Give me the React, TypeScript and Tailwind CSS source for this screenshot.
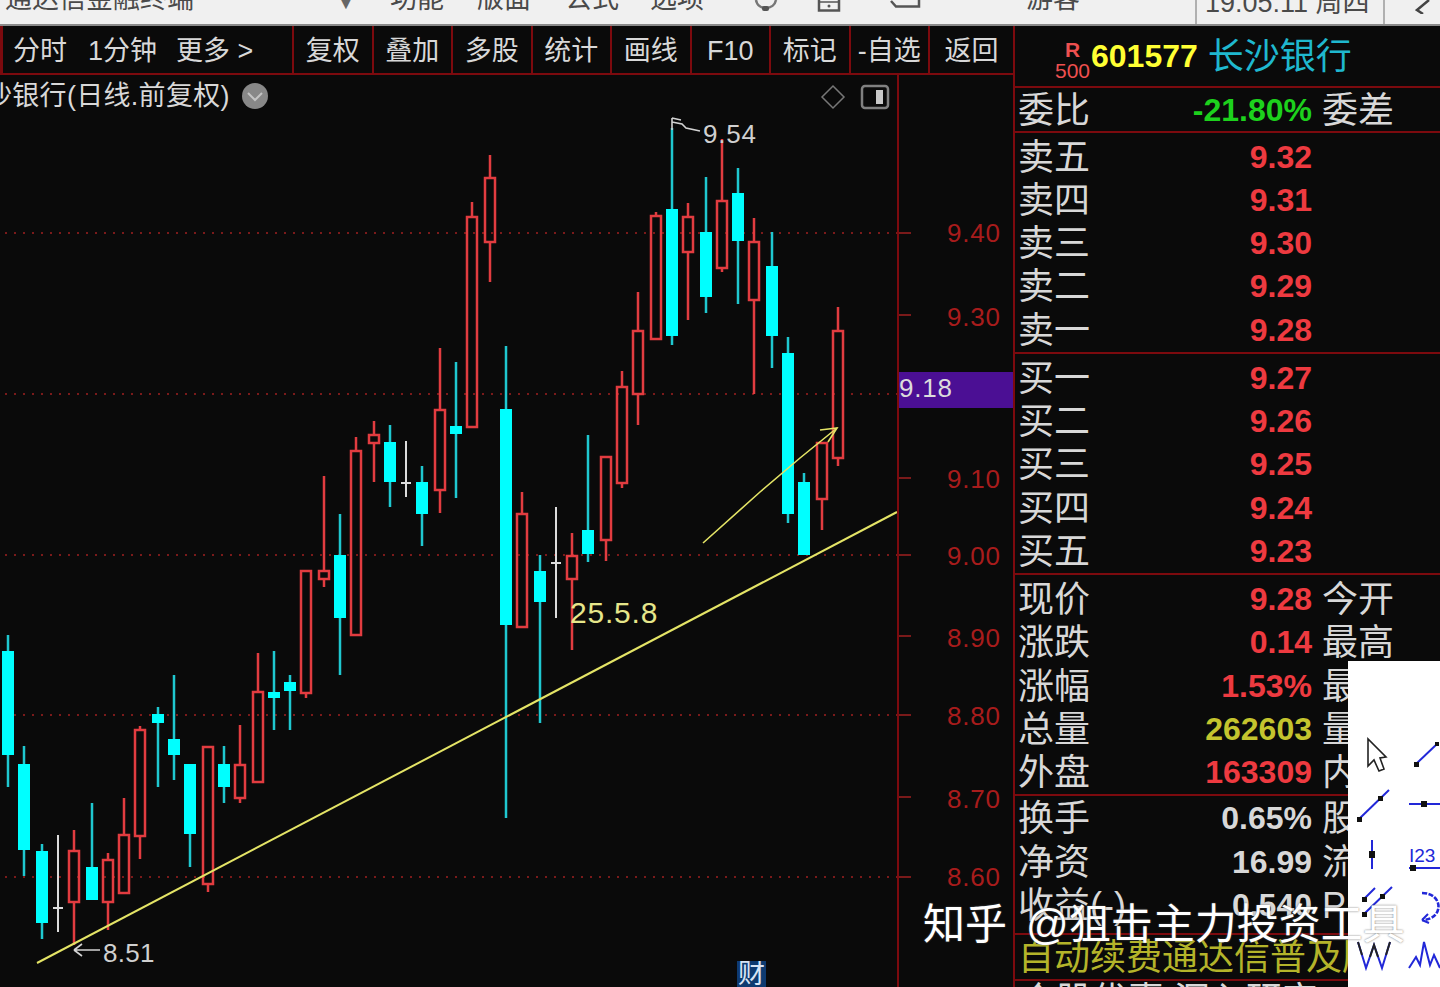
import React from "react";

type C = [string, number, number, number, number, number];
const candles: C[] = [
  ["c", 8, 635, 651, 755, 787], ["c", 24, 746, 764, 850, 876], ["c", 42, 844, 851, 923, 939],
  ["w", 58, 835, 908, 908, 932], ["r", 74, 830, 851, 902, 945], ["c", 92, 803, 867, 900, 900],
  ["r", 108, 853, 860, 902, 930], ["r", 124, 798, 835, 893, 893], ["r", 140, 726, 730, 836, 859],
  ["c", 158, 707, 714, 723, 787], ["c", 174, 675, 739, 755, 780], ["c", 190, 764, 764, 834, 867],
  ["r", 208, 747, 747, 884, 892], ["c", 224, 746, 764, 787, 803], ["r", 240, 725, 765, 798, 803],
  ["r", 258, 653, 692, 782, 782], ["c", 274, 651, 692, 698, 730], ["c", 290, 675, 682, 691, 730],
  ["r", 306, 571, 571, 693, 698], ["r", 324, 476, 571, 579, 587], ["c", 340, 514, 555, 618, 675],
  ["r", 356, 437, 451, 635, 635], ["r", 374, 421, 435, 443, 482], ["c", 390, 425, 442, 482, 507],
  ["w", 406, 441, 483, 483, 497], ["c", 422, 466, 482, 514, 546], ["r", 440, 348, 410, 490, 513],
  ["c", 456, 362, 426, 434, 498], ["r", 472, 202, 217, 427, 427], ["r", 490, 155, 178, 242, 282],
  ["c", 506, 346, 409, 625, 818], ["r", 522, 492, 514, 627, 627], ["c", 540, 555, 571, 602, 723],
  ["w", 556, 507, 563, 563, 618], ["r", 572, 533, 556, 579, 650], ["c", 588, 435, 530, 554, 562],
  ["r", 606, 457, 457, 540, 561], ["r", 622, 371, 387, 483, 488], ["r", 638, 292, 331, 394, 425],
  ["r", 656, 212, 216, 339, 339], ["c", 672, 128, 209, 336, 345], ["r", 688, 203, 217, 252, 320],
  ["c", 706, 177, 232, 297, 313], ["r", 722, 139, 201, 268, 272], ["c", 738, 168, 193, 241, 304],
  ["r", 754, 218, 242, 300, 394], ["c", 772, 232, 266, 336, 368], ["c", 788, 337, 353, 514, 523],
  ["c", 804, 473, 482, 555, 555], ["r", 822, 443, 443, 499, 530], ["r", 838, 307, 331, 458, 466],
];

const sans = "font-['Liberation_Sans','Noto_Sans_CJK_SC',sans-serif]";

function Candle({ c }: { c: C }) {
  const [kind, x, hi, top, bot, lo] = c;
  if (kind === "w") {
    return (
      <g stroke="#dcdcdc" strokeWidth={2}>
        <line x1={x} x2={x} y1={hi} y2={lo} />
        <line x1={x - 5} x2={x + 5} y1={top} y2={top} />
      </g>
    );
  }
  if (kind === "c") {
    return (
      <g>
        <line x1={x} x2={x} y1={hi} y2={lo} stroke="#1fc8d0" strokeWidth={2.5} />
        <rect x={x - 6} y={top} width={12} height={bot - top} fill="#00ffff" />
      </g>
    );
  }
  return (
    <g stroke="#e23c40" strokeWidth={2.5}>
      <line x1={x} x2={x} y1={hi} y2={top} />
      <line x1={x} x2={x} y1={bot} y2={lo} />
      <rect x={x - 5} y={top} width={10} height={bot - top} fill="none" />
    </g>
  );
}

function Row({ label, value, color, second }: { label: string; value?: string; color?: string; second?: string }) {
  return (
    <div className="flex h-[43.25px] items-center whitespace-nowrap pl-[3px]">
      <span className="w-[100px] shrink-0 pt-[2px] text-[36px] leading-none text-[#d8d8d8]">{label}</span>
      <span className={`w-[194px] shrink-0 text-right text-[32px] leading-none font-bold ${color ?? ""}`}>{value}</span>
      <span className="ml-[10px] pt-[2px] text-[36px] leading-none text-[#d8d8d8]">{second}</span>
    </div>
  );
}

const red = "text-[#ee3a40]";
const gray = "text-[#d8d8d8]";
const olive = "text-[#c4c42e]";

const tools = ["复权", "叠加", "多股", "统计", "画线", "F10", "标记", "-自选"];

function ToolIcons() {
  return (
    <svg viewBox="1348 661 92 326" className="h-[326px] w-[92px]">
      <path
        d="M1368 739 L1368 766 L1374 760 L1379 771 L1384 769 L1380 758 L1386 757 Z"
        fill="none"
        stroke="#222"
        strokeWidth={1.6}
      />
      <g stroke="#2228d8" strokeWidth={2} fill="none">
        <line x1={1416} y1={764} x2={1437} y2={744} />
        <line x1={1359} y1={819} x2={1389} y2={790} />
        <line x1={1409} y1={804} x2={1440} y2={804} />
        <line x1={1372} y1={840} x2={1372} y2={869} />
        <line x1={1409} y1={868} x2={1440} y2={868} />
        <line x1={1364} y1={899} x2={1375} y2={888} />
        <line x1={1364} y1={914} x2={1392} y2={887} />
        <path d="M1422 893 C1444 893 1444 920 1422 920" strokeDasharray="5 1.5" strokeWidth={2.6} />
        <path d="M1422 920 L1428 914 M1422 920 L1429 923" />
        <path d="M1358 942 L1366 968 L1374 945 L1382 968 L1390 942" />
        <path d="M1409 968 L1416 957 L1420 965 L1424 942 L1430 965 L1434 955 L1440 968" />
      </g>
      <path d="M1358 942 L1362 955 M1370 957 L1374 945 L1378 957 M1386 955 L1390 942" fill="none" stroke="#222" strokeWidth={2} />
      <text x={1409} y={862} className={`${sans} text-[19px]`} fill="#2228d8">
        I23
      </text>
      <g fill="#111">
        <rect x={1414} y={762} width={5} height={5} />
        <rect x={1435} y={742} width={4} height={4} />
        <rect x={1357} y={817} width={5} height={5} />
        <rect x={1378} y={796} width={5} height={5} />
        <rect x={1421} y={801} width={6} height={6} />
        <rect x={1369} y={851} width={6} height={7} />
        <rect x={1410} y={865} width={6} height={6} />
        <rect x={1362} y={897} width={5} height={5} />
        <rect x={1362} y={912} width={5} height={5} />
        <rect x={1380} y={894} width={5} height={5} />
      </g>
    </svg>
  );
}

export default function App() {
  return (
    <div className={`relative h-[987px] w-[1440px] overflow-hidden bg-[#0a0a0a] ${sans}`}>
      {/* window title bar, cut off by the top edge */}
      <div className="flex h-[26px] items-start overflow-hidden border-b-2 border-[#8a8a8a] bg-[#f0f0f0] text-[27px] leading-[27px] whitespace-nowrap text-[#4a4a4a]">
        <span className="-mt-[14px] ml-[5px] w-[330px] shrink-0">通达信金融终端</span>
        <span className="-mt-[12px] w-[55px] shrink-0 text-[22px] text-[#666]">▼</span>
        <span className="-mt-[14px] w-[87px] shrink-0">功能</span>
        <span className="-mt-[14px] w-[88px] shrink-0">版面</span>
        <span className="-mt-[14px] w-[85px] shrink-0">公式</span>
        <span className="-mt-[14px] w-[103px] shrink-0">选项</span>
        <svg viewBox="0 0 26 12" className="h-[12px] w-[26px] shrink-0">
          <path d="M3 0 C4 6 9 8 13 8 C18 8 22 5 23 0" fill="none" stroke="#777" strokeWidth={2.5} />
          <rect x={9} y={6} width={7} height={5} rx={2} fill="#555" />
        </svg>
        <svg viewBox="0 0 24 12" className="ml-[38px] h-[12px] w-[24px] shrink-0">
          <path d="M2 0 V10.5 H22 V0" fill="none" stroke="#555" strokeWidth={2.5} />
          <line x1={2} x2={22} y1={2} y2={2} stroke="#555" strokeWidth={1.5} />
          <circle cx={12} cy={6} r={1.5} fill="#555" />
        </svg>
        <svg viewBox="0 0 32 8" className="ml-[49px] h-[8px] w-[32px] shrink-0">
          <path d="M1 1 L6 6.5 H29 V0" fill="none" stroke="#555" strokeWidth={2.5} />
        </svg>
        <span className="-mt-[14px] ml-[104px] w-[169px] shrink-0">游客</span>
        <span className="-mt-[10px] h-[36px] w-[190px] shrink-0 border-x-2 border-[#b0b0b0] pl-[8px]">19:05:11 周四</span>
        <svg viewBox="0 0 16 14" className="ml-[30px] h-[14px] w-[16px] shrink-0">
          <path d="M14 0 L2 10 L8 14" fill="none" stroke="#444" strokeWidth={2.5} />
        </svg>
      </div>

      <div className="flex h-[961px]">
        {/* left: toolbar and chart */}
        <div className="flex w-[1013px] shrink-0 flex-col">
          <div className="flex h-[49px] shrink-0 items-center border-b-2 border-[#7c0a0e] text-[27px] leading-none whitespace-nowrap text-[#d8d8d8]">
            <div className="flex h-full w-[294px] shrink-0 items-center border-x-2 border-l-[3px] border-[#7c0a0e] pt-[3px] pl-[10px]">
              <span className="w-[75px]">分时</span>
              <span className="w-[88px]">1分钟</span>
              <span>更多 &gt;</span>
            </div>
            {tools.map((t) => (
              <div
                key={t}
                className="flex h-full w-[79.5px] shrink-0 items-center justify-center border-r-2 border-[#7c0a0e] pt-[3px]"
              >
                {t}
              </div>
            ))}
            <div className="flex h-full flex-1 items-center justify-center pt-[3px]">返回</div>
          </div>

          <div className="flex min-h-0 flex-1">
            <div className="relative h-[912px] w-[897px] shrink-0 overflow-hidden">
              <svg viewBox="0 75 897 912" className="block h-[912px] w-[897px]">
                <g stroke="#7a1a1a" strokeWidth={2} strokeDasharray="2 7">
                  {[233, 394, 555, 715, 877].map((y) => (
                    <line key={y} x1={5} x2={897} y1={y} y2={y} />
                  ))}
                </g>
                {candles.map((c) => (
                  <Candle key={c[1]} c={c} />
                ))}
                <g stroke="#e4e466" strokeWidth={2} fill="none">
                  <line x1={37} y1={963} x2={897} y2={512} />
                  <path d="M703 543 L760 492 L800 458 L837 428" strokeWidth={1.6} />
                  <path d="M820 430 L837 428 L828 442" strokeWidth={1.6} />
                </g>
                <g stroke="#d4d4d4" strokeWidth={1.6} fill="none">
                  <path d="M700 131 L686 128 L682 124 L672 122 M672 118 L672 130 M672 118 L681 120" />
                  <path d="M100 950 L74 950 M74 950 L82 944 M74 950 L82 956" />
                </g>
                <text x={703} y={143} className="text-[26px]" fill="#d0d0d0" letterSpacing={0.8}>
                  9.54
                </text>
                <text x={103} y={962} className="text-[26px]" fill="#d0d0d0" letterSpacing={0.3}>
                  8.51
                </text>
                <text x={570} y={623} className="text-[30px]" fill="#e6e68a" letterSpacing={0.8}>
                  25.5.8
                </text>
                <path d="M833 86 L844 97 L833 108 L822 97 Z" fill="none" stroke="#777" strokeWidth={1.5} />
                <rect x={862} y={86} width={26} height={22} rx={3} fill="none" stroke="#808080" strokeWidth={2.5} />
                <rect x={876} y={90} width={7} height={14} fill="#c8c8c8" />
                <circle cx={255} cy={96} r={13} fill="#888" />
                <path d="M248 93 L255 100 L262 93" fill="none" stroke="#c4c4c4" strokeWidth={2} />
              </svg>
              <div className="absolute top-[6px] -left-[15px] text-[27px] leading-[30px] tracking-[0.3px] whitespace-nowrap text-[#d8d8d8]">
                沙银行(日线.前复权)
              </div>
              <div className="absolute bottom-0 left-[737px] flex h-[26px] w-[29px] items-start justify-center overflow-hidden bg-[#0e3a70] text-[27px] leading-[27px] text-[#d8e4f4]">
                财
              </div>
            </div>

            <div className="h-[912px] flex-1 border-l-2 border-[#7c0a0e]">
              <svg viewBox="899 75 114 912" className="block h-[912px] w-[114px]">
                <g stroke="#7a1a1a" strokeWidth={2}>
                  {[233, 315, 394, 478, 555, 636, 715, 797, 877].map((y) => (
                    <line key={y} x1={899} x2={911} y1={y} y2={y} />
                  ))}
                </g>
                <rect x={899} y={372} width={114} height={36} fill="#4b0f94" />
                <text x={899} y={397} className="text-[26px]" fill="#dcdcdc" letterSpacing={0.8}>
                  9.18
                </text>
                {[
                  ["9.40", 233],
                  ["9.30", 317],
                  ["9.10", 479],
                  ["9.00", 556],
                  ["8.90", 638],
                  ["8.80", 716],
                  ["8.70", 799],
                  ["8.60", 877],
                ].map(([t, y]) => (
                  <text key={t} x={947} y={(y as number) + 9} className="text-[26px]" fill="#a81c1c" letterSpacing={0.8}>
                    {t}
                  </text>
                ))}
              </svg>
            </div>
          </div>
        </div>

        {/* right: quote panel */}
        <div className="min-w-0 flex-1 overflow-hidden border-l-2 border-[#7c0a0e]">
          <div className="flex h-[62px] items-center border-b-2 border-[#7c0a0e] pl-[39px] whitespace-nowrap">
            <div className="flex w-[37px] shrink-0 flex-col items-center pt-[8px] leading-none text-[#ee5050]">
              <span className="text-[21px] leading-[21px] font-bold">R</span>
              <span className="text-[21px] leading-[21px]">500</span>
            </div>
            <span className="text-[32px] leading-none font-bold text-[#ffff33]">601577</span>
            <span className="ml-[10px] pt-[2px] text-[36px] leading-none text-[#1fb8cf]">长沙银行</span>
          </div>
          <div className="h-[45px] border-b-2 border-[#7c0a0e]">
            <Row label="委比" value="-21.80%" color="text-[#1dd11d]" second="委差" />
          </div>
          <div className="border-b-2 border-[#7c0a0e] pt-[2px] pb-[1px]">
            <Row label="卖五" value="9.32" color={red} />
            <Row label="卖四" value="9.31" color={red} />
            <Row label="卖三" value="9.30" color={red} />
            <Row label="卖二" value="9.29" color={red} />
            <Row label="卖一" value="9.28" color={red} />
          </div>
          <div className="border-b-2 border-[#7c0a0e] pt-[2px]">
            <Row label="买一" value="9.27" color={red} />
            <Row label="买二" value="9.26" color={red} />
            <Row label="买三" value="9.25" color={red} />
            <Row label="买四" value="9.24" color={red} />
            <Row label="买五" value="9.23" color={red} />
          </div>
          <div className="border-b-2 border-[#7c0a0e] pt-[3px]">
            <Row label="现价" value="9.28" color={red} second="今开" />
            <Row label="涨跌" value="0.14" color={red} second="最高" />
            <Row label="涨幅" value="1.53%" color={red} second="最低" />
            <Row label="总量" value="262603" color={olive} second="量比" />
            <Row label="外盘" value="163309" color={red} second="内盘" />
          </div>
          <div className="border-b-2 border-[#7c0a0e] pt-[1px] pb-[6px]">
            <Row label="换手" value="0.65%" color={gray} second="股本" />
            <Row label="净资" value="16.99" color={gray} second="流通" />
            <Row label="收益(-)" value="0.540" color={gray} second="PE" />
          </div>
          <div className="flex h-[46px] items-center overflow-hidden border-b-2 border-[#7c0a0e] pt-[2px] pl-[3px] text-[36px] leading-none whitespace-nowrap text-[#b4b42a]">
            自动续费通达信普及版
          </div>
          <div className="pt-[2px] pl-[5px] text-[36px] leading-none whitespace-nowrap text-[#d8d8d8]">个股优惠 深入研究</div>
        </div>
      </div>

      {/* floating drawing-tools palette */}
      <div className="absolute top-[661px] left-[1348px] bg-white">
        <ToolIcons />
      </div>

      {/* watermark */}
      <div className="absolute top-[897px] left-[923px] flex items-center text-[42px] leading-[56px] whitespace-nowrap text-white [text-shadow:0_0_2px_rgba(90,90,90,0.9)]">
        <span className="mr-[19px]">知乎</span>
        <span>@狙击主力投资工具</span>
      </div>
    </div>
  );
}
